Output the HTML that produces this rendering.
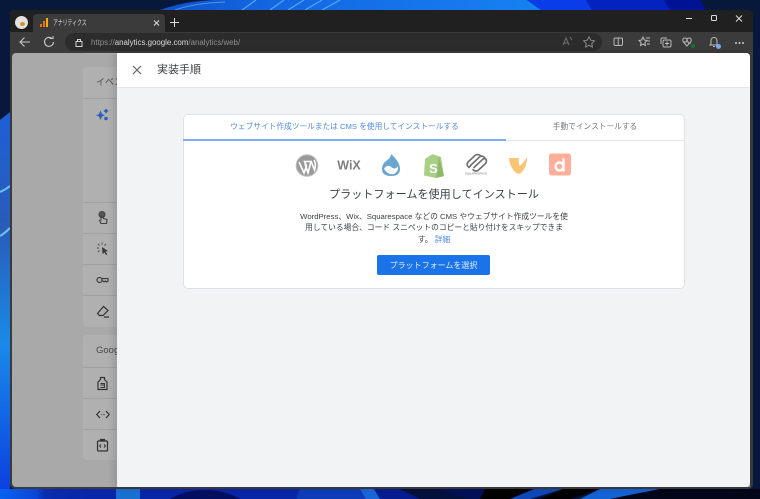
<!DOCTYPE html>
<html lang="ja"><head><meta charset="utf-8"><style>
*{box-sizing:border-box}
html,body{margin:0;padding:0;width:760px;height:499px;overflow:hidden;background:#001040;font-family:"Liberation Sans","Noto Sans CJK JP",sans-serif}
.a{position:absolute;white-space:nowrap}
svg{position:absolute;overflow:visible}
</style></head><body>
<svg style="left:0;top:0" width="760" height="499" viewBox="0 0 760 499">
<defs>
<linearGradient id="lb" x1="0" x2="0" y1="0" y2="1"><stop offset="0" stop-color="#1d5fd8"/><stop offset=".3" stop-color="#2a5cb8"/><stop offset=".6" stop-color="#1a8ae8"/><stop offset="1" stop-color="#0a3ce0"/></linearGradient>
<linearGradient id="tp" x1="0" x2="1" y1="0" y2="0"><stop offset="0" stop-color="#0f50c8"/><stop offset=".25" stop-color="#1464e0"/><stop offset="1" stop-color="#1682f2"/></linearGradient>
<linearGradient id="bl" x1="0" x2="1" y1="0" y2="0"><stop offset="0" stop-color="#0a62f0"/><stop offset=".12" stop-color="#0a46d8"/><stop offset=".15" stop-color="#0a2cb0"/><stop offset=".3" stop-color="#0726a8"/></linearGradient>
</defs>
<rect width="760" height="499" fill="#07183a"/>
<path d="M160 10Q185 1 215 0H527L541 10Z" fill="url(#tp)"/>
<path d="M175 10Q195 3 225 2" stroke="#4a96e8" stroke-width="1" fill="none"/>
<path d="M242 10L256 0M270 10L284 0M288 10L304 0M305 10L322 0M322 10L340 0" stroke="#58a6f0" stroke-width="1.200" fill="none"/>
<path d="M527 0H586L592 10H541Z" fill="#0a3ce8"/>
<path d="M586 0H664L670 10H592Z" fill="#0422c0"/>
<path d="M664 0H700L706 10H670Z" fill="#021294"/>
<path d="M0 120L10 112V499H0Z" fill="url(#lb)"/>
<path d="M0 192Q5 190 10 186M0 236Q5 233 10 228" stroke="#6cc4f4" stroke-width="2" fill="none"/>
<path d="M0 489H760V499H0Z" fill="#02103c"/>
<rect x="0" y="489" width="300" height="10" fill="url(#bl)"/>
<path d="M116 489H140V499H116Z" fill="#1a70d0"/>
<path d="M170 499Q185 490 205 490Q225 490 240 499Z" fill="#020e60"/>
<path d="M300 489H360L368 499H296Z" fill="#0c3cb8"/>
<path d="M360 489H374L380 499H366Z" fill="#1a66d8"/>
<path d="M374 489H400L420 499H380Z" fill="#041c90"/>
<path d="M437 489H485L510 499H470Z" fill="#021058"/>
<path d="M485 489H534L520 499H480Z" fill="#000"/>
<path d="M534 489H563L530 499H510Z" fill="#0c48b8"/>
<path d="M563 489H600L570 499H540Z" fill="#000"/>
<path d="M600 489H660L610 499H580Z" fill="#1262d4"/>
<path d="M660 489H760V499H610Z" fill="#020618"/>
</svg>
<div class="a" style="left:10px;top:10px;width:743px;height:479px;background:#3b3b3b;border-radius:5px"></div>
<div class="a" style="left:10px;top:10px;width:743px;height:22px;background:#202020;border-radius:5px 5px 0 0"></div>
<div class="a" style="left:33px;top:14px;width:132px;height:18px;background:#3b3b3b;border-radius:4px 4px 0 0"></div>
<div class="a" style="left:15px;top:16px;width:13px;height:13px;background:#e4e2dc;border-radius:50%"></div>
<div class="a" style="left:20px;top:22px;width:5px;height:4px;background:#c9943a;border-radius:50%"></div>
<svg style="left:40px;top:18px" width="9" height="10"><rect x="0" y="6" width="2" height="3" fill="#e8710a"/><rect x="3" y="3" width="2" height="6" fill="#e8710a"/><rect x="6" y="0" width="2" height="9" fill="#f9ab00"/></svg>
<div class="a" style="left:53px;top:17px;font-size:7.500px;line-height:11px;color:#d8d8d8;transform:scaleX(.65);transform-origin:left center">アナリティクス</div>
<svg style="left:154px;top:20px" width="5" height="6"><path d="M0 .5L5 5.500M5 .5L0 5.500" stroke="#ddd" stroke-width="1"/></svg>
<svg style="left:170px;top:18px" width="9" height="9"><path d="M4.500 0V9M0 4.500H9" stroke="#ddd" stroke-width="1"/></svg>
<svg style="left:686px;top:14px" width="60" height="10" fill="none" stroke="#ddd" stroke-width="1"><path d="M0 4.500H6"/><rect x="25.500" y="1.500" width="5" height="5" rx="1"/><path d="M50 1.500L56 7.500M56 1.500L50 7.500"/></svg>
<div class="a" style="left:65px;top:33px;width:537px;height:18px;background:#2c2c2c;border-radius:9px"></div>
<svg style="left:19px;top:36px" width="40" height="12" fill="none" stroke="#c8c8c8" stroke-width="1.100"><path d="M1 6H11M5.500 1.500L1 6L5.500 10.500"/><path d="M33 2.500A4.500 4.500 0 1 0 34.500 6M30.500 2.500H34V0"/></svg>
<svg style="left:75px;top:38px" width="8" height="9" fill="none" stroke="#d0d0d0" stroke-width="1"><rect x="1" y="3.500" width="6" height="5"/><path d="M2.500 3.500V1.500H5.500V3.500"/></svg>
<div class="a" style="left:91px;top:37px;font-size:7.900px;line-height:11px;color:#8f8f8f">https://<span style="color:#d8d8d8">analytics.google.com</span>/analytics/web/</div>
<svg style="left:560px;top:35px" width="185" height="13" fill="none" stroke="#b8b8b8" stroke-width="1">
<path d="M3 10L6 3L9 10M4 8H8M10 2L12 5" stroke="#707070"/>
<path d="M29 2L30.800 5.200L34.400 5.800L31.800 8.400L32.400 12L29 10.300L25.600 12L26.200 8.400L23.600 5.800L27.200 5.200Z" stroke="#8a8a8a"/>
<rect x="54" y="3" width="8.500" height="7.500" rx="1.500"/><path d="M58.200 3V10.500"/>
<path d="M83 2L84.400 5L87 5.500L85 7.500L85.500 10.500L83 9L80.500 10.500L81 7.500L79 5.500L81.600 5ZM86 3H90M87.500 6H90M87 9H90"/>
<rect x="103" y="5" width="8" height="7" rx="1.500"/><path d="M107 6.500V10.500M105 8.500H109M101 9V4.500Q101 3 102.500 3H107"/>
<path d="M127 11L123 6.500Q122 3 125 3Q126.500 3 127 4.500Q127.500 3 129 3Q132 3 131 6.500ZM123 7H126L127 5L128.500 8H131"/>
<path d="M151 9V5.500A3 3 0 0 1 157 5.500V9L158 10H150ZM153 11.500H155"/></svg>
<div class="a" style="left:691px;top:44px;width:4px;height:4px;background:#137333;border-radius:50%"></div>
<div class="a" style="left:716px;top:44px;width:5px;height:5px;background:#7aa7ef;border-radius:50%"></div>
<div class="a" style="left:735px;top:41.500px;width:9px;height:2px;background:radial-gradient(circle at 1px 1px,#ccc 1px,transparent 1px) 0 0/3.500px 2px repeat-x"></div>

<div class="a" style="left:12px;top:53px;width:738px;height:434px;background:#a9a9aa;border-radius:4px 4px 0 4px;overflow:hidden">
<div class="a" style="left:71px;top:-12px;width:40px;height:13px;background:#b0b0b1;border-radius:4px"></div>
<div class="a" style="left:71px;top:14px;width:40px;height:260px;background:#b0b0b1;border-radius:4px 0 0 4px"></div>
<div class="a" style="left:71px;top:282px;width:40px;height:125px;background:#b0b0b1;border-radius:4px 0 0 4px"></div>
<div class="a" style="left:71px;top:45px;width:40px;height:1px;background:#a0a0a1"></div>
<div class="a" style="left:71px;top:149px;width:40px;height:1px;background:#a0a0a1"></div>
<div class="a" style="left:71px;top:180px;width:40px;height:1px;background:#a0a0a1"></div>
<div class="a" style="left:71px;top:211px;width:40px;height:1px;background:#a0a0a1"></div>
<div class="a" style="left:71px;top:242px;width:40px;height:1px;background:#a0a0a1"></div>
<div class="a" style="left:71px;top:314px;width:40px;height:1px;background:#a0a0a1"></div>
<div class="a" style="left:71px;top:345px;width:40px;height:1px;background:#a0a0a1"></div>
<div class="a" style="left:71px;top:376px;width:40px;height:1px;background:#a0a0a1"></div>
<div class="a" style="left:84px;top:23px;font-size:9px;line-height:12px;color:#4a4a4a">イベン</div>
<div class="a" style="left:84px;top:292px;font-size:9.500px;line-height:12px;color:#4a4a4a">Googl</div>
<svg style="left:84px;top:55px" width="14" height="14" fill="#2d5fb8"><path d="M4.500 2.500L6 6L9 7.200L6 8.500L4.500 12L3 8.500L0 7.200L3 6Z"/><path d="M10 0.500L11.200 2L12.500 3L11.200 4L10 5.500L8.800 4L7.500 3L8.800 2Z"/><circle cx="10" cy="10.500" r="1.800"/></svg>
<svg style="left:84px;top:158px" width="14" height="14" fill="none" stroke="#424242" stroke-width="1.100"><circle cx="6" cy="3.500" r="3" fill="#555"/><path d="M5 5V9L3.500 9.500L5 12.500H10.500L11 8.500L7.500 7.500V5"/></svg>
<svg style="left:84px;top:189px" width="14" height="14"><path d="M6 5L12 9L9.500 9.800L11.500 12.500L10 13L8.500 10.500L6.500 12Z" fill="#3a3a3a"/><path d="M1 6H3M6 0.500V2.500M2 2L3.500 3.500M10 2L8.500 3.500M2 10L3.500 8.500" stroke="#4a4a4a"/></svg>
<svg style="left:84px;top:221px" width="14" height="12" fill="none" stroke="#424242" stroke-width="1.200"><circle cx="3.500" cy="6" r="2.500"/><path d="M6 4.500H12V7L10.500 8L9.500 7L8 8L7 7H6"/></svg>
<svg style="left:84px;top:252px" width="14" height="14" fill="none" stroke="#333" stroke-width="1.200"><path d="M7.500 1.500L12 5.500L7 10.500H3.500L1.500 8.500ZM8 12H13"/></svg>
<svg style="left:84px;top:323px" width="14" height="16" fill="none" stroke="#333" stroke-width="1.200"><path d="M4.500 1.500H8.500V3.500L11 6V13.500H2V6L4.500 3.500Z"/><path d="M4.500 7.500H8.500V9H4.500M8.500 9V11.500H4.500" stroke-width=".9"/></svg>
<svg style="left:84px;top:356px" width="14" height="12" fill="none" stroke="#333" stroke-width="1.200"><path d="M4 2L.8 5.500L4 9M10 2L13.200 5.500L10 9"/><path d="M5.500 5.500H6.200M7.500 5.500H8.500" stroke-dasharray="1 1"/></svg>
<svg style="left:84px;top:385px" width="14" height="16" fill="none" stroke="#333" stroke-width="1.200"><rect x="1.500" y="3" width="10" height="10" rx="1"/><path d="M4.500 3V1.500H8.500V3" fill="#333"/><path d="M5 6.500L3.500 8L5 9.500M8 6.500L9.500 8L8 9.500" stroke-width="1"/></svg>
</div>

<div class="a" style="left:117px;top:53px;width:633px;height:434px;background:#f1f3f4;border-radius:0 4px 4px 0;box-shadow:-3px 0 8px rgba(0,0,0,.14)"></div>
<div class="a" style="left:117px;top:53px;width:633px;height:35px;background:#fff;border-bottom:1px solid #e3e5e7;border-radius:0 4px 0 0"></div>
<svg style="left:132px;top:65px" width="10" height="10"><path d="M1 1L9 9M9 1L1 9" stroke="#5f6368" stroke-width="1.200"/></svg>
<div class="a" style="left:157px;top:63px;font-size:11px;line-height:15px;color:#3c4043">実装手順</div>

<div class="a" style="left:183px;top:114px;width:502px;height:175px;background:#fff;border:1px solid #dfe1e5;border-radius:5px"></div>
<div class="a" style="left:184px;top:140px;width:500px;height:1px;background:#e3e5e7"></div>
<div class="a" style="left:183px;top:139px;width:323px;height:2px;background:#7faef3"></div>
<div class="a" style="left:184px;top:121px;width:321px;text-align:center;font-size:7.700px;line-height:12px;color:#4f8ae8">ウェブサイト作成ツールまたは CMS を使用してインストールする</div>
<div class="a" style="left:506px;top:121px;width:178px;text-align:center;font-size:7.700px;line-height:12px;color:#74787d">手動でインストールする</div>

<svg style="left:295px;top:153px" width="280" height="26">
<circle cx="12" cy="12.500" r="10.800" fill="#9a9a9a" stroke="#c0c0c0" stroke-width="1"/>
<path d="M4 9L9 20L11.500 13L9.500 8.500H16L13 20L10 11M16 8L19.500 17Q21.500 11 19 7" stroke="#fff" stroke-width="1.600" fill="none"/>
<text x="54" y="16.500" font-family="Liberation Sans,sans-serif" font-size="12.500" font-weight="700" text-anchor="middle" fill="#7e7e7e">WiX</text>
<path d="M96 1Q96 5 91 8Q87 11 87 16Q87 23 96 23Q105 23 105 16Q105 9 96 1Z" fill="#6aa6d0"/>
<path d="M89 15.500Q93 11 96 14Q100 17.500 103 13Q104 18 99 21Q92 22 89 15.500Z" fill="#fff"/>
<path d="M130 6L136 2Q138 .5 140 2L146 4L149 23L141 25L129 22.500Z" fill="#a8cf84"/>
<path d="M144 3.500L149 23L141 25Z" fill="#8fb96a"/>
<text x="138.500" y="20" font-family="Liberation Sans,sans-serif" font-size="13" font-weight="700" text-anchor="middle" fill="#fff">S</text>
<g fill="none" stroke="#6e6e6e" stroke-width="1.600" stroke-linecap="round"><path d="M173 9L180 2.500Q183 .5 186 3M176 12L184.500 4Q187.500 2 190 5M179 14.500L188 6Q191 4.500 191.500 8Q191.500 9.500 190 11L183 17.500Q180 19 178 16.500M173 9Q171 12 174 14.500M176 12L174 14.500"/></g>
<text x="181" y="21.500" font-family="Liberation Sans,sans-serif" font-size="3" text-anchor="middle" fill="#7a7a7a">SQUARESPACE</text>
<path d="M214 5H224Q223 11 225 13Q229 9 232 4Q232 14 226 20Q223 22 220 19Q214 12 214 5Z" fill="#fbc574"/>
<rect x="254" y="0.500" width="22" height="22" rx="2.500" fill="#ffaf99"/>
<circle cx="264.500" cy="13.500" r="4" fill="none" stroke="#fff" stroke-width="2.400"/><path d="M268.500 5.500V18.500" stroke="#fff" stroke-width="2.400"/>
</svg>

<div class="a" style="left:184px;top:187px;width:500px;text-align:center;font-size:11.100px;line-height:16px;color:#3c4043">プラットフォームを使用してインストール</div>
<div class="a" style="left:284px;top:211px;width:300px;text-align:center;font-size:7.750px;line-height:11.400px;color:#3c4043">WordPress、Wix、Squarespace などの CMS やウェブサイト作成ツールを使<br>用している場合、コード スニペットのコピーと貼り付けをスキップできま<br>す。 <span style="color:#4f8ae8">詳細</span></div>
<div class="a" style="left:377px;top:255px;width:113px;height:20px;background:#1a73e8;border-radius:2px;color:#e8f0fe;font-size:8px;line-height:21px;text-align:center">プラットフォームを選択</div>
</body></html>
